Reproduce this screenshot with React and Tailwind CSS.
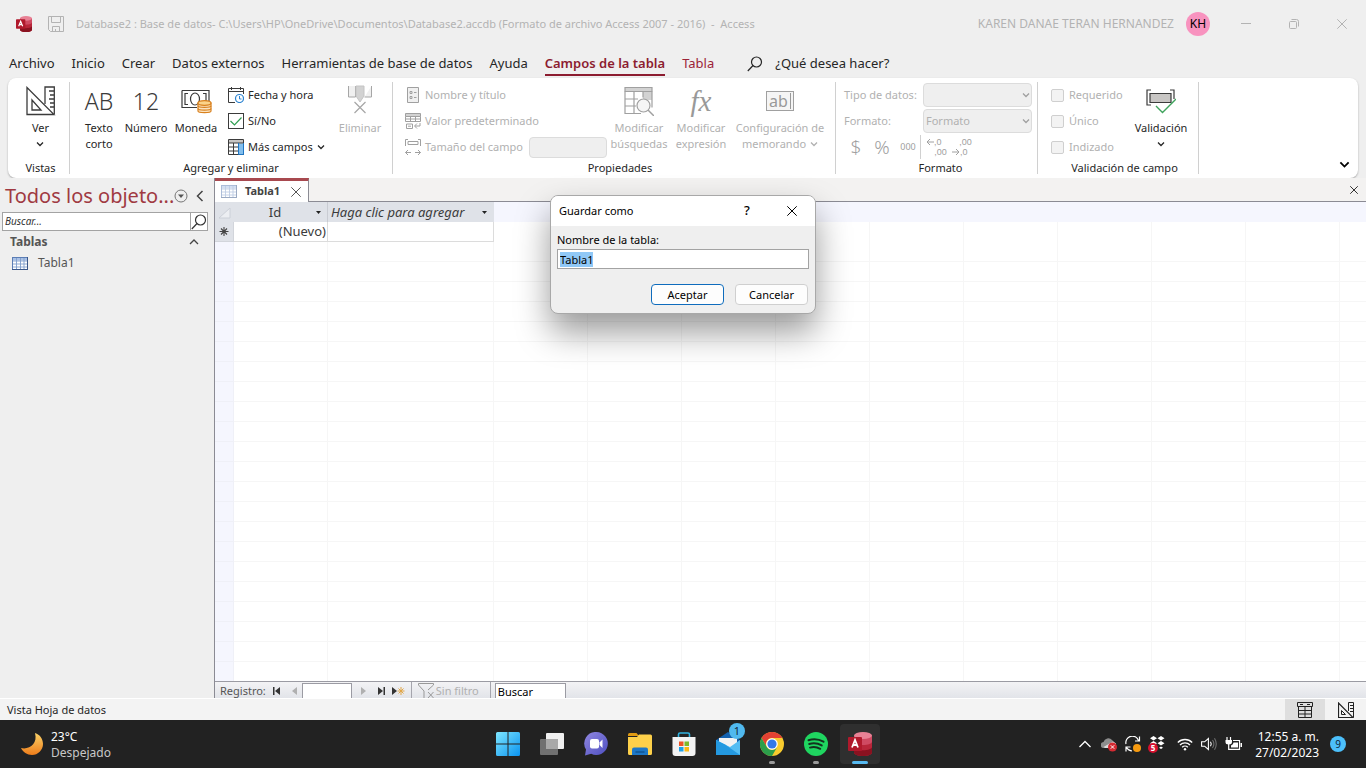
import React, { useEffect, useRef } from "react";

/* ---------- shared drawings ---------- */

function AccessLogo({ className }) {
  return (
    <svg viewBox="0 0 24 24" className={className} aria-hidden="true">
      <path d="M6 3.500v17C6 22.400 10 24 15 24s9-1.600 9-3.500v-17z" fill="#b8263a" />
      <path d="M6 3.500v6C6 11.500 10 13 15 13s9-1.500 9-3.500v-6z" fill="#cf4a62" />
      <path d="M6 15v5.500C6 22.500 10 24 15 24s9-1.500 9-3.500V15c0 1.800-4 3.200-9 3.200S6 16.800 6 15z" fill="#8a1220" />
      <ellipse cx="15" cy="3.500" rx="9" ry="3.500" fill="#e88195" />
      <rect x="0" y="5" width="14" height="14" rx="1" fill="#b0192c" />
      <path d="M4 15.500 7 8l3 7.500M5 13h4" fill="none" stroke="#fff" strokeWidth="1.800" />
    </svg>
  );
}

function Chevron({ className = "size-2" }) {
  return (
    <svg viewBox="0 0 8 8" className={className} fill="none" stroke="currentColor" strokeWidth="1.300" aria-hidden="true">
      <path d="M1 2.500 4 5.500 7 2.500" />
    </svg>
  );
}

function SearchGlyph({ className }) {
  return (
    <svg viewBox="0 0 16 16" className={className} fill="none" stroke="currentColor" strokeWidth="1.200" aria-hidden="true">
      <circle cx="9.500" cy="6" r="5" />
      <path d="M6 9.500.800 15" />
    </svg>
  );
}

function CloseGlyph({ className }) {
  return (
    <svg viewBox="0 0 10 10" className={className} fill="none" stroke="currentColor" aria-hidden="true">
      <path d="M.3.300 9.700 9.700M9.700.300.300 9.700" />
    </svg>
  );
}

function TableGlyph({ className }) {
  return (
    <svg viewBox="0 0 16 13" className={className} aria-hidden="true">
      <rect x=".5" y=".5" width="15" height="12" fill="#fff" stroke="#5b7db5" />
      <path d="M1 1h14v2.500H1z" fill="#a9c1e6" />
      <path d="M1 4h14M1 7h14M1 10h14M4.500 1v11M8.500 1v11M12 1v11" stroke="#7f9dcc" strokeWidth=".9" />
      <path d="M0 12.500h16M15.500 0v13" stroke="#3a5789" />
    </svg>
  );
}

function DesignGlyph({ className }) {
  return (
    <svg viewBox="0 0 30 30" className={className} fill="none" stroke="currentColor" strokeWidth="1.300" aria-hidden="true">
      <path d="M1 1.500V28.500H28z" />
      <path d="M6 14v10h9z" />
      <path d="M19 18V1h9.300v27M28 5h-5M28 9h-4M28 13h-5M28 17h-4M28 21h-4" />
    </svg>
  );
}

function SmallDesignGlyph({ className }) {
  return (
    <svg viewBox="0 0 16 16" className={className} fill="none" stroke="currentColor" aria-hidden="true">
      <path d="M.5 1v14.500H15z" strokeWidth="1.200" />
      <path d="M3.500 8.500v4h4z" />
      <path d="M10.500 9V.500h5v15M15 3.500h-3M15 6.500h-3M15 9.500h-3" />
    </svg>
  );
}

function CheckGlyph() {
  return (
    <svg viewBox="0 0 16 16" className="size-4" fill="none" aria-hidden="true">
      <rect x=".5" y=".5" width="15" height="15" stroke="#3b3b3b" />
      <path d="M2.500 8 6.500 12 13.500 4.500" stroke="#2f9e51" strokeWidth="1.200" />
    </svg>
  );
}

/* ---------- ribbon pieces ---------- */

function Group({ label, className, children }) {
  return (
    <section className={`flex shrink-0 flex-col border-r border-[#d0d0d0] ${className}`}>
      <div className="flex h-[78px] shrink-0">{children}</div>
      <h2 className="text-center text-[11px] leading-4 text-[#262626]">{label}</h2>
    </section>
  );
}

function BigButton({ icon, children, className = "", disabled }) {
  return (
    <button type="button" disabled={disabled} className={`flex shrink-0 flex-col items-center gap-[3px] pt-[3px] text-center text-[11px] leading-4 text-[#262626] disabled:text-[#b1b1b1] ${className}`}>
      <span className="flex h-8 items-center justify-center">{icon}</span>
      <span className="whitespace-nowrap">{children}</span>
    </button>
  );
}

function SmallButton({ icon, children, disabled }) {
  return (
    <button type="button" disabled={disabled} className="flex h-[26px] items-center gap-1 whitespace-nowrap text-[11px] text-[#262626] disabled:text-[#b1b1b1]">
      {icon}
      {children}
    </button>
  );
}

function ComboBox({ id, value }) {
  return (
    <span className="relative flex w-[109px] items-center">
      <select id={id} disabled className="h-6 w-full appearance-none rounded-sm border border-[#dcdcdc] bg-[#efefef] px-[2px] text-[11px] text-[#b1b1b1] opacity-100">
        <option>{value}</option>
      </select>
      <Chevron className="absolute right-[2px] size-2 text-[#a0a0a0]" />
    </span>
  );
}

function Ribbon() {
  return (
    <div className="mx-2 flex h-[100px] shrink-0 rounded-lg bg-white pt-1 shadow-[0_1px_2px_rgba(0,0,0,0.3)]">
      <div className="flex h-[92px] min-w-0 flex-1">
        <Group label="Vistas" className="w-[62px] pl-1">
          <BigButton className="w-full" icon={<DesignGlyph className="size-[30px] text-[#3b3b3b]" />}>
            Ver
            <span className="flex h-4 items-center justify-center"><Chevron /></span>
          </BigButton>
        </Group>

        <Group label="Agregar y eliminar" className="w-[323px]">
          <BigButton className="w-[58px]" icon={<span className="text-[23px] font-light text-[#3b3b3b]">AB</span>}>
            Texto<br />corto
          </BigButton>
          <BigButton className="w-9" icon={<span className="text-[23px] font-light text-[#3b3b3b]">12</span>}>
            Número
          </BigButton>
          <BigButton className="w-16" icon={
            <svg viewBox="0 0 32 28" className="h-7 w-8" fill="none" stroke="#3b3b3b" strokeWidth="1.200" aria-hidden="true">
              <path d="M2 3.500h27v12M2 3.500v17h15" />
              <path d="M8 6.500H5v11h3M23 6.500h3v8" />
              <ellipse cx="15" cy="12" rx="4.500" ry="6" />
              <path d="M18 16v8c0 2.200 13 2.200 13 0v-8z" fill="#fbe3c0" stroke="#d9811e" />
              <ellipse cx="24.500" cy="16" rx="6.500" ry="2.300" fill="#fbd38a" stroke="#d9811e" />
              <path d="M18 18.800c0 2.200 13 2.200 13 0M18 21.500c0 2.200 13 2.200 13 0" stroke="#d9811e" />
            </svg>
          }>
            Moneda
          </BigButton>
          <div className="flex w-[105px] flex-col">
            <SmallButton icon={
              <svg viewBox="0 0 16 16" className="size-4" fill="none" aria-hidden="true">
                <path d="M7 15.500H.5v-14h15V7M.5 4.500h15M3.500 0v3M12.500 0v3" stroke="#3b3b3b" />
                <circle cx="11.500" cy="11.500" r="4" stroke="#2b83d1" strokeWidth="1.200" />
                <path d="M11.500 9v3h2" stroke="#2b83d1" />
              </svg>
            }>Fecha y hora</SmallButton>
            <SmallButton icon={<CheckGlyph />}>Sí/No</SmallButton>
            <SmallButton icon={
              <svg viewBox="0 0 16 16" className="size-4" fill="none" aria-hidden="true">
                <path d="M1 1h14v3H1z" fill="#c8c6c4" />
                <path d="M10.500 4.500h5v11h-5z" fill="#83beec" />
                <path d="M.5.500h15v15H.5zM.5 4h15M.5 8h10M.5 12h10M5.500 4v11.500" stroke="#3b3b3b" />
                <path d="M10.500 4v11.500h5V4" stroke="#1e76c4" />
              </svg>
            }>Más campos <Chevron /></SmallButton>
          </div>
          <BigButton disabled className="w-[54px]" icon={
            <svg viewBox="0 0 26 32" className="h-8 w-[26px]" fill="none" stroke="#a6a6a6" aria-hidden="true">
              <path d="M1.500 1v11h7V1M17.500 12h7V1" fill="#f0f0f0" />
              <path d="M9 1v10l4 6 4-6V1z" fill="#d2d2d2" stroke="#c4c4c4" />
              <path d="m7.500 17 11 11m0-11-11 11" strokeWidth="1.200" />
            </svg>
          }>
            Eliminar
          </BigButton>
        </Group>

        <Group label="Propiedades" className="w-[443px] pl-3">
          <div className="flex w-[202px] flex-col">
            <SmallButton disabled icon={
              <svg viewBox="0 0 16 16" className="size-4" fill="#f0f0f0" stroke="#a0a0a0" aria-hidden="true">
                <path d="M2.500.500h11v15h-11z" />
                <path d="M5 4.500h2v2H5zM5 9.500h2v2H5zM9 5.500h2.500M9 10.500h2.500" />
              </svg>
            }>Nombre y título</SmallButton>
            <SmallButton disabled icon={
              <svg viewBox="0 0 16 16" className="size-4" fill="none" stroke="#a0a0a0" aria-hidden="true">
                <path d="M.5.500h15v3H.5z" fill="#d2d2d2" />
                <path d="M.5 3.500v5h15v-5M.5 6h15M5.500 3v5.500M10.500 3v5.500M1.500 11h6v4.500h-6zM3 13.200h3M15 10v3H10M12 10.500 9.500 13l2.500 2.500" />
              </svg>
            }>Valor predeterminado</SmallButton>
            <div className="flex h-[26px] items-center gap-1 text-[11px] text-[#b1b1b1]">
              <svg viewBox="0 0 16 16" className="size-4 shrink-0" fill="none" stroke="#a0a0a0" aria-hidden="true">
                <path d="M.5 7V.500H3M13 .500h2.500V7M3 2.500h10v3H3zM.5 13.500H6M3 11 .5 13.500 3 16M10 13.500h5.500M13 11l2.500 2.500L13 16" />
              </svg>
              <label htmlFor="field-size" className="whitespace-nowrap">Tamaño del campo</label>
              <input id="field-size" disabled className="ml-auto h-[21px] w-[78px] shrink-0 rounded-sm border border-[#dcdcdc] bg-[#efefef]" />
            </div>
          </div>
          <BigButton disabled className="w-16" icon={
            <svg viewBox="0 0 30 30" className="size-[30px]" fill="none" stroke="#a0a0a0" strokeWidth="1.200" aria-hidden="true">
              <path d="M19 5h9v9h-9z" fill="#d2d2d2" stroke="none" />
              <path d="M1 1.500h27v4H1z" fill="#d2d2d2" />
              <path d="M1 5.500v22h16M28 5.500v16M1 13h13M1 20h11M10 5.500v22M19 5.500v6" />
              <circle cx="19.500" cy="19.500" r="6.500" fill="#f5f5f5" />
              <path d="m24 24 6 6" strokeWidth="1.500" />
            </svg>
          }>
            Modificar<br />búsquedas
          </BigButton>
          <BigButton disabled className="w-[60px]" icon={<span className="font-['Liberation_Serif',serif] text-[29px] font-normal italic leading-none text-[#999]">fx</span>}>
            Modificar<br />expresión
          </BigButton>
          <BigButton disabled className="w-[98px]" icon={
            <span className="flex h-5 w-7 items-center justify-center gap-[2px] border border-[#a0a0a0] bg-[#f5f5f5] text-[16px] leading-none text-[#999]">
              ab<span className="h-4 border-l border-[#999]" />
            </span>
          }>
            Configuración de<br />
            <span className="flex items-center justify-center gap-1">memorando <Chevron /></span>
          </BigButton>
        </Group>

        <Group label="Formato" className="w-[202px] pl-2">
          <div className="flex w-[188px] flex-col text-[11px] text-[#b1b1b1]">
            <div className="flex h-[26px] items-center justify-between whitespace-nowrap">
              <label htmlFor="data-type">Tipo de datos:</label>
              <ComboBox id="data-type" value="" />
            </div>
            <div className="flex h-[26px] items-center justify-between">
              <label htmlFor="format">Formato:</label>
              <ComboBox id="format" value="Formato" />
            </div>
            <div className="flex h-[26px] items-center text-[#a0a0a0]">
              <button type="button" disabled aria-label="Moneda" className="w-6 text-[19px] font-light leading-none">$</button>
              <button type="button" disabled aria-label="Porcentaje" className="w-7 text-[19px] font-light leading-none">%</button>
              <button type="button" disabled aria-label="Millares" className="w-6 text-[9px]">000</button>
              <span className="h-6 border-l border-[#d0d0d0]" />
              <button type="button" disabled aria-label="Aumentar decimales" className="ml-[5px] flex w-[26px] flex-col font-['Liberation_Sans',sans-serif] text-[9px] leading-[10px]">
                <span className="flex items-center">
                  <svg viewBox="0 0 8 8" className="size-2" fill="none" stroke="currentColor" aria-hidden="true"><path d="M8 4H1M4 1 1 4l3 3" /></svg>,0
                </span>
                <span className="pl-[3px]">,00</span>
              </button>
              <button type="button" disabled aria-label="Disminuir decimales" className="flex w-6 flex-col font-['Liberation_Sans',sans-serif] text-[9px] leading-[10px]">
                <span className="pl-[3px]">,00</span>
                <span className="flex items-center">
                  <svg viewBox="0 0 8 8" className="size-2" fill="none" stroke="currentColor" aria-hidden="true"><path d="M0 4h7M4 1l3 3-3 3" /></svg>,0
                </span>
              </button>
            </div>
          </div>
        </Group>

        <Group label="Validación de campo" className="w-[161px] pl-[13px]">
          <div className="flex w-[76px] flex-col">
            {["Requerido", "Único", "Indizado"].map((name) => (
              <label key={name} className="flex h-[26px] items-center gap-[5px] text-[11px] text-[#b1b1b1]">
                <input type="checkbox" disabled className="size-[13px] shrink-0 appearance-none rounded-xs border border-[#cfcfcf] bg-[#f3f3f3]" />
                {name}
              </label>
            ))}
          </div>
          <BigButton className="w-[68px]" icon={
            <svg viewBox="0 0 30 26" className="h-[26px] w-[30px]" fill="none" stroke="#3b3b3b" strokeWidth="1.200" aria-hidden="true">
              <path d="M5 2H1v15h4M24 2h4v9" />
              <path d="M4 5.500h21v9H4z" fill="#c8c6c4" />
              <path d="m10 18 6.500 6.500L30 11" stroke="#3fa35c" strokeWidth="1.400" />
            </svg>
          }>
            Validación
            <span className="flex h-4 items-center justify-center"><Chevron /></span>
          </BigButton>
        </Group>
      </div>
      <button type="button" aria-label="Contraer cinta" className="flex w-7 items-end justify-center pb-2">
        <Chevron className="size-[11px] text-black" />
      </button>
    </div>
  );
}

/* ---------- window chrome ---------- */

function TitleBar() {
  return (
    <header className="flex h-12 shrink-0 items-center pl-4 text-[11px] text-[#b3b3b3]">
      <AccessLogo className="size-4" />
      <button type="button" aria-label="Guardar" className="ml-4">
        <svg viewBox="0 0 16 16" className="size-4" fill="none" stroke="currentColor" aria-hidden="true">
          <path d="M.5.500h15v15h-13l-2-2zM3.500.500v6h9v-6M4.500 15.500v-5h7v5M7.500 13v2.500" />
        </svg>
      </button>
      <h1 className="ml-3 min-w-0 flex-1 truncate whitespace-pre">Database2 : Base de datos- C:\Users\HP\OneDrive\Documentos\Database2.accdb (Formato de archivo Access 2007 - 2016)  -  Access</h1>
      <span className="whitespace-nowrap text-[12px]">KAREN DANAE TERAN HERNANDEZ</span>
      <span className="ml-3 flex size-6 items-center justify-center rounded-full bg-[#f893bf] text-[12px] text-black">KH</span>
      <div className="ml-3 flex">
        <button type="button" aria-label="Minimizar" className="flex w-12 justify-center">
          <svg viewBox="0 0 10 10" className="size-[10px]" stroke="currentColor" aria-hidden="true"><path d="M0 4.500h10" /></svg>
        </button>
        <button type="button" aria-label="Restaurar" className="flex w-12 justify-center">
          <svg viewBox="0 0 10 10" className="size-[10px]" fill="none" stroke="currentColor" aria-hidden="true">
            <rect x=".5" y="2.500" width="7" height="7" rx="1" /><path d="M2.500.500h5a2 2 0 0 1 2 2v5" />
          </svg>
        </button>
        <button type="button" aria-label="Cerrar" className="flex w-12 justify-center"><CloseGlyph className="size-[10px]" /></button>
      </div>
    </header>
  );
}

function MenuTabs() {
  return (
    <nav className="flex h-[30px] shrink-0 items-center gap-[17px] whitespace-nowrap pl-[9px] pt-[2px] text-[13px] text-[#262626]">
      <button type="button">Archivo</button>
      <button type="button">Inicio</button>
      <button type="button">Crear</button>
      <button type="button">Datos externos</button>
      <button type="button">Herramientas de base de datos</button>
      <button type="button">Ayuda</button>
      <button type="button" className="border-y-2 border-b-[#8c1c30] border-t-transparent font-semibold text-[#8c1c30]">Campos de la tabla</button>
      <button type="button" className="text-[#9c2338]">Tabla</button>
      <button type="button" className="ml-4 flex items-center gap-3">
        <SearchGlyph className="size-4" />
        ¿Qué desea hacer?
      </button>
    </nav>
  );
}

function Sidebar() {
  return (
    <aside className="w-[214px] shrink-0 bg-[#efefef] pt-px">
      <div className="flex h-[33px] items-center pl-[5px]">
        <h2 className="w-[169px] whitespace-nowrap text-[20px] text-[#a03a42]">Todos los objeto...</h2>
        <button type="button" aria-label="Filtrar objetos">
          <svg viewBox="0 0 14 14" className="size-[14px]" aria-hidden="true">
            <circle cx="7" cy="7" r="6" fill="none" stroke="#767676" /><path d="M4 5.500h6L7 9z" fill="#555" />
          </svg>
        </button>
        <button type="button" aria-label="Contraer panel" className="ml-2">
          <svg viewBox="0 0 8 12" className="h-3 w-2" fill="none" stroke="#444" strokeWidth="1.500" aria-hidden="true"><path d="M6.500 1 1.500 6l5 5" /></svg>
        </button>
      </div>
      <div className="ml-[2px] flex h-[19px] w-[206px] border border-[#a3a3a3] bg-white">
        <input type="text" aria-label="Buscar objetos" placeholder="Buscar..." className="min-w-0 flex-1 px-[2px] text-[10px] italic outline-none placeholder:text-[#333]" />
        <button type="button" aria-label="Buscar" className="flex w-[17px] items-center justify-center border-l border-[#a3a3a3] text-[#333]">
          <SearchGlyph className="size-4" />
        </button>
      </div>
      <div className="flex h-[22px] items-center justify-between pl-[10px] pr-[15px]">
        <h3 className="text-[12px] font-bold text-[#555]">Tablas</h3>
        <svg viewBox="0 0 10 6" className="h-[6px] w-[10px]" fill="none" stroke="#444" strokeWidth="1.300" aria-hidden="true"><path d="M1 5l4-4 4 4" /></svg>
      </div>
      <button type="button" className="flex h-5 items-center gap-[10px] pl-3 text-[12px] text-[#555]">
        <TableGlyph className="h-[13px] w-4" />
        Tabla1
      </button>
    </aside>
  );
}

const emptyColumns = Array.from({ length: 20 }, (_, i) => i);
const emptyRows = Array.from({ length: 60 }, (_, i) => i);

function Arrow() {
  return <svg viewBox="0 0 5 3" className="h-[3px] w-[5px]" aria-hidden="true"><path d="M0 0h5L2.500 3z" fill="#222" /></svg>;
}

function Datasheet() {
  return (
    <div className="min-h-0 flex-1 overflow-hidden">
      <table className="w-[2159px] table-fixed border-separate border-spacing-0 text-[13px] text-[#3b3b3b]">
        <colgroup>
          <col className="w-[19px]" />
          <col className="w-[94px]" />
          <col className="w-[166px]" />
          {emptyColumns.map((c) => <col key={c} className="w-[94px]" />)}
        </colgroup>
        <thead>
          <tr className="h-5">
            <th className="bg-[#dfe2e8] p-0">
              <svg viewBox="0 0 18 19" className="h-[19px] w-[18px]" aria-hidden="true"><path d="M15 5v10H4z" fill="#eceef2" stroke="#ccd0d8" /></svg>
            </th>
            <th className="border-r border-[#c9ccd3] bg-[#dfe2e8] p-0 font-normal">
              <div className="flex items-center pr-[6px]"><span className="flex-1 text-center leading-[19px]">Id</span><Arrow /></div>
            </th>
            <th className="bg-[#dfe2e8] p-0 font-normal italic">
              <div className="flex items-center justify-between whitespace-nowrap pl-[3px] pr-[7px] leading-[19px]">Haga clic para agregar<Arrow /></div>
            </th>
            {emptyColumns.map((c) => <th key={c} className="bg-[#f5f6fe] p-0" />)}
          </tr>
        </thead>
        <tbody>
          <tr className="h-5">
            <td className="border-b border-r border-[#d2d5db] bg-[#dfe2e8] p-0">
              <svg viewBox="0 0 17 19" className="h-[19px] w-[17px]" stroke="#444" strokeWidth="1.100" aria-hidden="true"><path d="M9 5v9M4.500 9.500h9M6 6.500l6 6M12 6.500l-6 6" /></svg>
            </td>
            <td className="border-b border-r border-[#dcdcdc] p-0 pr-px text-right leading-[19px]">(Nuevo)</td>
            <td className="border-b border-r border-[#dcdcdc] p-0" />
            {emptyColumns.map((c) => <td key={c} className="border-r border-[#f6f6f6] p-0" />)}
          </tr>
          {emptyRows.map((r) => (
            <tr key={r} className="h-5">
              <td className="border-b border-r border-[#eff0f7] bg-[#f5f6fe] p-0" />
              <td className="border-b border-r border-[#f6f6f6] p-0" />
              <td className="border-b border-r border-[#f6f6f6] p-0" />
              {emptyColumns.map((c) => <td key={c} className="border-b border-r border-[#f6f6f6] p-0" />)}
            </tr>
          ))}
        </tbody>
      </table>
    </div>
  );
}

function RecordBar() {
  return (
    <div className="flex h-[17px] shrink-0 items-start overflow-hidden border-t border-[#9b9ba3] bg-linear-to-b from-[#f3f3f5] to-[#e2e4e9] pl-[5px] text-[11px] leading-[18px] text-[#555]">
      <span>Registro:</span>
      <button type="button" aria-label="Primero" className="ml-[7px] flex h-[18px] items-center">
        <svg viewBox="0 0 7 8" className="h-2 w-[7px]" fill="#333" aria-hidden="true"><path d="M0 0h1.500v8H0zM7 0v8L2 4z" /></svg>
      </button>
      <button type="button" aria-label="Anterior" className="ml-3 flex h-[18px] items-center">
        <svg viewBox="0 0 5 8" className="h-2 w-[5px]" fill="#b0b0b0" aria-hidden="true"><path d="M5 0v8L0 4z" /></svg>
      </button>
      <input type="text" aria-label="Registro actual" className="ml-[5px] mt-px h-[18px] w-[50px] border border-[#9b9ba3] bg-white" />
      <button type="button" aria-label="Siguiente" className="ml-[9px] flex h-[18px] items-center">
        <svg viewBox="0 0 5 8" className="h-2 w-[5px]" fill="#b0b0b0" aria-hidden="true"><path d="M0 0v8l5-4z" /></svg>
      </button>
      <button type="button" aria-label="Último" className="ml-3 flex h-[18px] items-center">
        <svg viewBox="0 0 7 8" className="h-2 w-[7px]" fill="#333" aria-hidden="true"><path d="M5.500 0H7v8H5.500zM0 0v8l5-4z" /></svg>
      </button>
      <button type="button" aria-label="Nuevo registro" className="ml-[7px] flex h-[18px] items-center">
        <svg viewBox="0 0 13 8" className="h-2 w-[13px]" aria-hidden="true">
          <path d="M0 0v8l5-4z" fill="#333" /><path d="M9 0v8M5.500 4h7M6.500 1.500l5 5M11.500 1.500l-5 5" stroke="#e0a546" />
        </svg>
      </button>
      <button type="button" disabled className="ml-[6px] flex h-[18px] w-20 items-center gap-[2px] border-x border-[#a5a5ad] pl-[6px] text-[#b0b0b0]">
        <svg viewBox="0 0 16 16" className="size-4 shrink-0" fill="none" stroke="#999" aria-hidden="true"><path d="M6 15V8L.500 2V.500h15V2L10 7M10 9l5.500 6M15.500 9 10 15" /></svg>
        <span className="whitespace-nowrap">Sin filtro</span>
      </button>
      <input type="text" aria-label="Buscar en la hoja" defaultValue="Buscar" className="ml-1 mt-px h-[18px] w-[71px] border border-[#9b9ba3] bg-white px-[2px] text-black" />
    </div>
  );
}

function SaveDialog() {
  const nameRef = useRef(null);
  useEffect(() => {
    nameRef.current.focus();
    nameRef.current.select();
  }, []);
  return (
    <div className="absolute inset-0 flex items-start justify-center pt-[195px]">
      <form role="dialog" aria-labelledby="dialog-title" onSubmit={(e) => e.preventDefault()} className="w-[266px] overflow-hidden rounded-lg border border-[#a8a8a8] bg-[#efefef] text-[11px] text-black shadow-[0_18px_34px_rgba(0,0,0,0.4)]">
        <div className="flex h-[30px] items-center bg-white pl-2 pr-[18px]">
          <h2 id="dialog-title" className="flex-1">Guardar como</h2>
          <button type="button" aria-label="Ayuda" className="w-5 text-[13px] font-medium">?</button>
          <button type="button" aria-label="Cerrar" className="ml-[30px]"><CloseGlyph className="size-[10px]" /></button>
        </div>
        <div className="flex flex-col px-[6px] pb-2 pt-[6px]">
          <label htmlFor="table-name" className="leading-4">Nombre de la tabla:</label>
          <input ref={nameRef} id="table-name" type="text" defaultValue="Tabla1" className="mt-px h-5 border border-[#a3a3a3] bg-white px-[2px] leading-4 outline-none selection:bg-[#90c8f6] selection:text-black" />
          <div className="mt-[15px] flex justify-end gap-[11px] pr-px">
            <button type="submit" className="h-[21px] w-[73px] rounded-sm border border-[#0f6cbd] bg-[#fdfdfd] pt-px leading-4">Aceptar</button>
            <button type="button" className="h-[21px] w-[73px] rounded-sm border border-[#cfcfcf] bg-[#fdfdfd] pt-px leading-4">Cancelar</button>
          </div>
        </div>
      </form>
    </div>
  );
}

/* ---------- taskbar ---------- */

function TaskButton({ label, children, className = "" }) {
  return <button type="button" aria-label={label} className={`relative flex h-10 w-10 items-center justify-center rounded ${className}`}>{children}</button>;
}

function RunningMark() {
  return <span className="absolute bottom-0 h-[3px] w-[6px] rounded-full bg-[#9a9a9a]" />;
}

function Taskbar() {
  return (
    <footer className="grid h-12 shrink-0 grid-cols-[1fr_auto_1fr] items-center bg-[#222] text-[12px] text-white">
      <div className="flex items-center gap-2 pl-[21px]">
        <svg viewBox="0 0 22 22" className="size-[22px]" aria-hidden="true">
          <defs><linearGradient id="moon" x1="0" y1="0" x2="0" y2="1"><stop offset="0" stopColor="#fbd268" /><stop offset="1" stopColor="#ee7d1b" /></linearGradient></defs>
          <path d="M14 0c5 1.500 8 6 8 11 0 6-5 11-11 11-5 0-9-3-11-7 8 2 17-4 14-15z" fill="url(#moon)" />
        </svg>
        <div className="pt-[2px] leading-4"><div>23°C</div><div className="text-[#c8c8c8]">Despejado</div></div>
      </div>

      <div className="flex gap-1 pl-[2px]">
        <TaskButton label="Inicio">
          <svg viewBox="0 0 24 24" className="size-6" aria-hidden="true">
            <defs><linearGradient id="win" x1="0" y1="0" x2="1" y2="1"><stop offset="0" stopColor="#7ee6ff" /><stop offset="1" stopColor="#0a93f0" /></linearGradient></defs>
            <path d="M1.500 0H11.500V11.500H0V1.500Q0 0 1.500 0zM12.500 0h10Q24 0 24 1.500v10H12.500zM0 12.500h11.500V24H1.500Q0 24 0 22.500zM12.500 12.500H24v10Q24 24 22.500 24h-10z" fill="url(#win)" />
          </svg>
        </TaskButton>
        <TaskButton label="Vista de tareas">
          <svg viewBox="0 0 24 24" className="size-6" aria-hidden="true">
            <rect x="6" y="1" width="18" height="16" rx="1" fill="#f0f0f0" /><rect x="0" y="7" width="18" height="16" rx="1" fill="#707070" /><path d="M6 7h12v10H6z" fill="#a9a9a9" />
          </svg>
        </TaskButton>
        <TaskButton label="Chat">
          <svg viewBox="0 0 24 24" className="size-6" aria-hidden="true">
            <defs><linearGradient id="chat" x1="0" y1="0" x2="1" y2="1"><stop offset="0" stopColor="#9187e0" /><stop offset="1" stopColor="#4d4fc0" /></linearGradient></defs>
            <path d="M12.500 0a11.500 11.500 0 1 1-5.300 21.800L1 23.500l1-6A11.500 11.500 0 0 1 12.500 0z" fill="url(#chat)" />
            <rect x="6" y="7" width="9" height="9.500" rx="2" fill="#fff" /><path d="m15.500 10.500 3-3v8.500l-3-3z" fill="#fff" />
          </svg>
        </TaskButton>
        <TaskButton label="Explorador de archivos">
          <svg viewBox="0 0 24 22" className="h-[22px] w-6" aria-hidden="true">
            <path d="M0 1.500Q0 0 1.500 0h7L11 3H0z" fill="#e09a12" /><path d="M0 4h9l2-2.500h11.500Q24 1.500 24 3v17.500Q24 22 22.500 22h-21Q0 22 0 20.500z" fill="#fdd04a" />
            <path d="M4 22v-5.500Q4 14.500 6 14.500h12q2 0 2 2V22z" fill="#1d77c6" /><path d="M7.500 19h9" stroke="#105592" strokeWidth="1.500" />
          </svg>
        </TaskButton>
        <TaskButton label="Microsoft Store">
          <svg viewBox="0 0 24 24" className="size-6" aria-hidden="true">
            <path d="M6.500 7V2.500Q6.500 1 8 1h8q1.500 0 1.500 1.500V7" fill="none" stroke="#30b3e0" strokeWidth="1.600" />
            <path d="M.5 5h23v16q0 3-3 3h-17q-3 0-3-3z" fill="#f2f2f2" />
            <path d="M7 9.500h4.500V14H7z" fill="#ef5325" /><path d="M12.500 9.500H17V14h-4.500z" fill="#7fb92a" /><path d="M7 15h4.500v4.500H7z" fill="#1ca1e8" /><path d="M12.500 15H17v4.500h-4.500z" fill="#fdb813" />
          </svg>
        </TaskButton>
        <TaskButton label="Correo">
          <svg viewBox="0 0 24 24" className="size-6" aria-hidden="true">
            <path d="m0 8 12-8 12 8v14H0z" fill="#1360ad" /><path d="M3 6h18v7l-9 4-9-4z" fill="#f2f2f2" /><path d="M0 8l14 7 10-7v15H0z" fill="#54bdf3" /><path d="M0 8v15h24L9 12.500z" fill="#2499e0" />
          </svg>
          <span className="absolute right-[3px] top-[-1px] flex size-4 items-center justify-center rounded-full bg-[#50b9ee] text-[11px] text-[#10263a]">1</span>
        </TaskButton>
        <TaskButton label="Chrome">
          <svg viewBox="0 0 24 24" className="size-6" aria-hidden="true">
            <circle cx="12" cy="12" r="12" fill="#f8cb2e" /><path d="M1.600 6A12 12 0 0 1 22.400 6H12a6 6 0 0 0-5.200 9z" fill="#e34133" /><path d="M1.600 6A12 12 0 0 0 12 24l5.200-9a6 6 0 0 1-10.400 0z" fill="#2c9e4b" />
            <circle cx="12" cy="12" r="5.800" fill="#fff" /><circle cx="12" cy="12" r="4.600" fill="#3378e8" />
          </svg>
          <RunningMark />
        </TaskButton>
        <TaskButton label="Spotify">
          <svg viewBox="0 0 24 24" className="size-6" aria-hidden="true">
            <circle cx="12" cy="12" r="12" fill="#1fd560" /><path d="M4.500 8.200c5-1.500 10.500-1 15 1.500M5.200 12c4.500-1.200 8.500-.8 12.500 1.400M6 15.600c3.500-.9 7-.6 10.200 1.200" fill="none" stroke="#14321f" strokeWidth="2" strokeLinecap="round" />
          </svg>
          <RunningMark />
        </TaskButton>
        <TaskButton label="Access" className="bg-[#2f2f2f]">
          <AccessLogo className="size-6" />
          <span className="absolute bottom-0 h-[3px] w-4 rounded-full bg-[#56b9f0]" />
        </TaskButton>
      </div>

      <div className="flex items-center justify-end pr-5">
        <svg viewBox="0 0 12 8" className="h-2 w-3" fill="none" stroke="#fff" strokeWidth="1.300" aria-hidden="true"><path d="m.5 7L6 1.500 11.500 7" /></svg>
        <svg viewBox="0 0 16 16" className="ml-[10px] size-4" aria-hidden="true">
          <path d="M3 12a3 3 0 0 1-.5-6A5 5 0 0 1 11 4l3 3v5z" fill="#8d8d8d" /><path d="M2.500 11 12 5.500l3 2V12H4z" fill="#dcdcdc" />
          <circle cx="11.500" cy="11" r="4.500" fill="#d42a32" /><path d="m9.800 9.300 3.400 3.400m0-3.400-3.400 3.400" stroke="#fff" />
        </svg>
        <svg viewBox="0 0 16 16" className="ml-2 size-4" fill="none" stroke="#fff" strokeWidth="1.200" aria-hidden="true">
          <path d="M1 8a6.500 6.500 0 0 1 12.500-3.500M14.500.500v4.500H10M1 15.500V11h4.500M1.500 11.500C3 14 5 14.800 7 15" /><circle cx="12" cy="12" r="4" fill="#f79b10" stroke="none" />
        </svg>
        <span className="relative ml-2 flex size-4">
          <svg viewBox="0 0 16 16" className="size-4" fill="#fff" aria-hidden="true"><path d="m4.500 0 3.500 2.200L4.500 4.500 1 2.200zM12 0l3.500 2.200L12 4.500 8.500 2.200zM4.500 5 8 7.200 4.500 9.500 1 7.200zM12 5l3.500 2.200L12 9.500 8.500 7.200zM12 10.500l2 1.200-2 1.300-2-1.300z" /></svg>
          <span className="absolute bottom-[-1px] left-[-1px] flex size-[10px] items-center justify-center rounded-full bg-[#d6102f] text-[8px] font-bold leading-none">5</span>
        </span>
        <svg viewBox="0 0 16 14" className="ml-3 h-[14px] w-4" fill="none" stroke="#fff" strokeWidth="1.300" aria-hidden="true">
          <path d="M.8 5.500a10.200 10.200 0 0 1 14.400 0M3 8a7 7 0 0 1 10 0M5.200 10.300a4 4 0 0 1 5.600 0" /><circle cx="8" cy="12.300" r="1.200" fill="#fff" stroke="none" />
        </svg>
        <svg viewBox="0 0 16 14" className="ml-2 h-[14px] w-4" fill="none" stroke="#fff" strokeWidth="1.100" aria-hidden="true">
          <path d="M.6 4.800h3L7.400 1.500v11L3.600 9.200h-3z" /><path d="M9.500 4.800q1.500 2.200 0 4.400" /><path d="M11.500 3q2.800 4 0 8M13.500 1.200q3.500 5.800 0 11.600" stroke="#6f6f6f" />
        </svg>
        <svg viewBox="0 0 17 14" className="ml-2 h-[14px] w-[17px]" fill="none" stroke="#fff" strokeWidth="1.200" aria-hidden="true">
          <path d="M2 0v4M5.500 0v4M3.700 7v5.400H14.500V3.500H8" />
          <path d="M.5 3h6.500v2Q7 7.500 3.700 7.500T.5 5z" fill="#fff" stroke="none" />
          <path d="M8.500 5.500H13v5H6V8.500q2.500-.8 2.500-3zM15.500 6H17v4h-1.500z" fill="#fff" stroke="none" />
        </svg>
        <div className="ml-[13px] pt-px text-right leading-4"><div>12:55 a. m.</div><div>27/02/2023</div></div>
        <span className="ml-[11px] flex size-4 items-center justify-center rounded-full bg-[#4cc0fb] text-[10px] text-[#10263a]">9</span>
      </div>
    </footer>
  );
}

export default function App() {
  return (
    <div className="relative flex h-screen flex-col overflow-hidden bg-[#efefef] font-['Noto_Sans','Open_Sans',sans-serif]">
      <TitleBar />
      <MenuTabs />
      <Ribbon />
      <main className="flex min-h-0 flex-1">
        <Sidebar />
        <section className="flex min-w-0 flex-1 flex-col border-l border-[#8b8b94] bg-white">
          <div className="flex h-6 shrink-0 bg-[#f3f2f1]">
            <div className="flex w-[94px] items-center border-r border-t-[3px] border-r-[#8b8b94] border-t-[#a8494f] bg-white pl-[6px]">
              <TableGlyph className="h-[13px] w-4 opacity-50" />
              <span className="ml-2 text-[11px] font-bold text-[#444]">Tabla1</span>
              <button type="button" aria-label="Cerrar Tabla1" className="ml-[11px] text-[#555]"><CloseGlyph className="size-[10px]" /></button>
            </div>
            <div className="flex flex-1 items-center justify-end border-b border-[#8b8b94] pr-2">
              <button type="button" aria-label="Cerrar documento"><CloseGlyph className="size-2 text-black" /></button>
            </div>
          </div>
          <Datasheet />
          <RecordBar />
        </section>
      </main>
      <div className="flex h-[22px] shrink-0 items-center border-t border-white bg-[#f3f3f3] pl-[7px] text-[11px] text-[#262626]">
        <span className="flex-1 pt-px">Vista Hoja de datos</span>
        <button type="button" aria-label="Vista Hoja de datos" className="flex h-full w-10 items-center justify-center bg-[#dedede]">
          <svg viewBox="0 0 16 16" className="size-4" fill="none" stroke="#222" aria-hidden="true">
            <path d="M.5.500h15v4H.5zM1.500 4.500v11h13v-11M1.500 8.500h13M1.500 12h13M8 4.500v11M3 2.500h3M10 2.500h3" />
          </svg>
        </button>
        <button type="button" aria-label="Vista Diseño" className="flex h-full w-[41px] items-center justify-center">
          <SmallDesignGlyph className="size-4 text-[#222]" />
        </button>
      </div>
      <Taskbar />
      <SaveDialog />
    </div>
  );
}
